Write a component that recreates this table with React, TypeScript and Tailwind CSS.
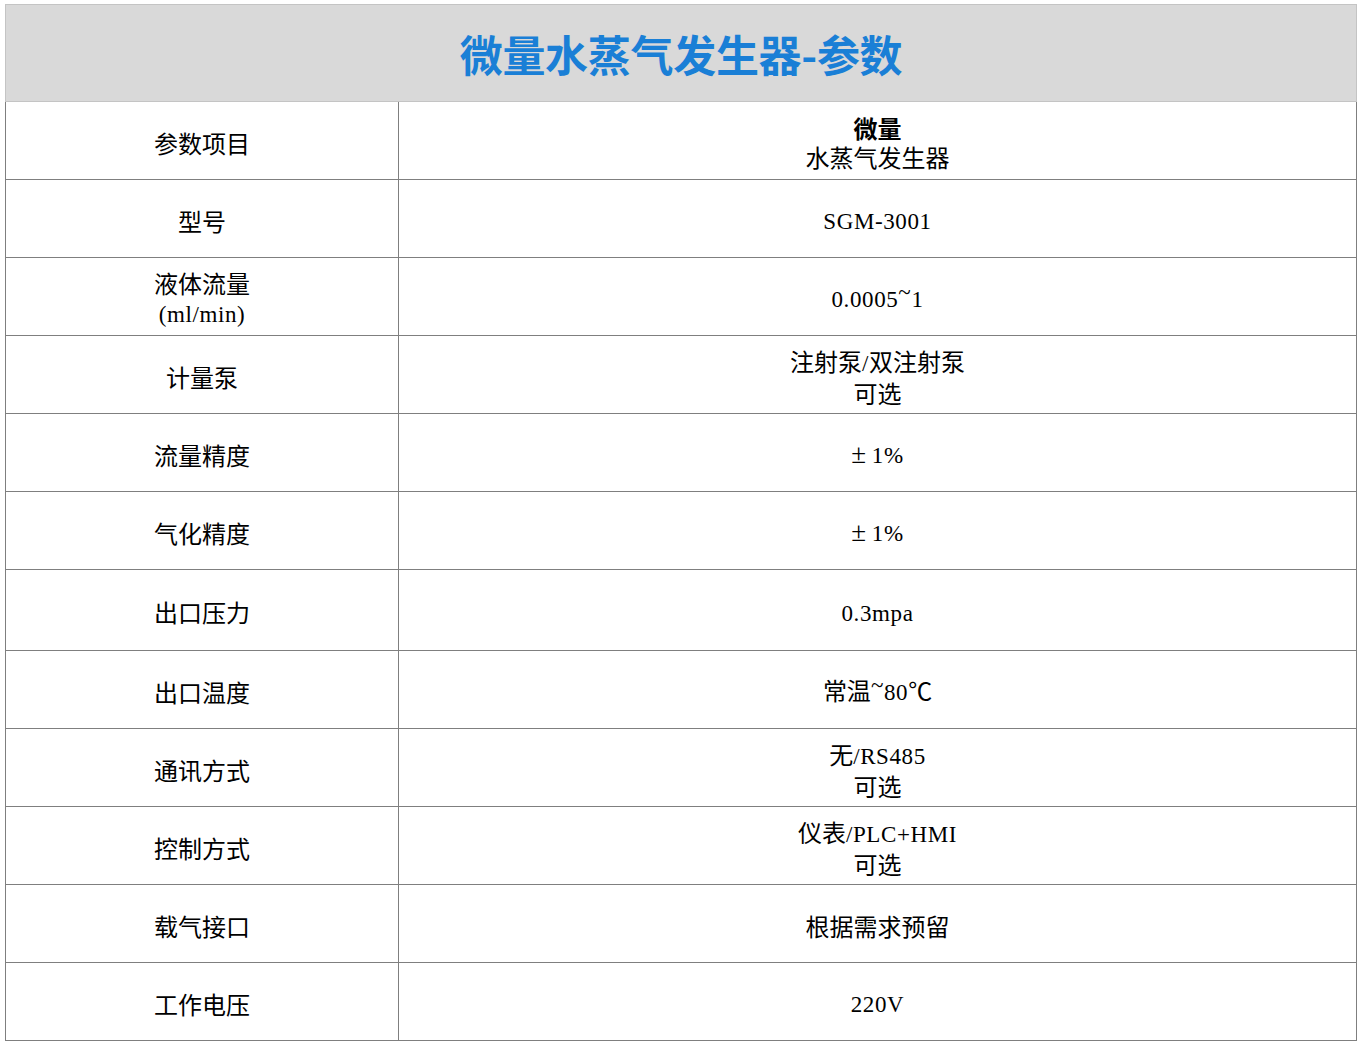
const rows: { label: string[]; value: string[]; h?: string }[] = [
  { label: ["型号"], value: ["SGM-3001"] },
  { label: ["液体流量", "(ml/min)"], value: ["0.0005~1"] },
  { label: ["计量泵"], value: ["注射泵/双注射泵", "可选"] },
  { label: ["流量精度"], value: ["±1%"] },
  { label: ["气化精度"], value: ["±1%"] },
  { label: ["出口压力"], value: ["0.3mpa"], h: "h-[81px]" },
  { label: ["出口温度"], value: ["常温~80℃"] },
  { label: ["通讯方式"], value: ["无/RS485", "可选"] },
  { label: ["控制方式"], value: ["仪表/PLC+HMI", "可选"] },
  { label: ["载气接口"], value: ["根据需求预留"] },
  { label: ["工作电压"], value: ["220V"] },
];

// latin runs get a serif face like the original page, cjk stays sans
function Mixed({ text }: { text: string }) {
  const parts = text.match(/[\x20-\x7e±]+|[^\x20-\x7e±]+/g) ?? [];
  return (
    <>
      {parts.map((p, i) => {
        if (!/^[\x20-\x7e±]+$/.test(p)) return <span key={i}>{p}</span>;
        return (
          <span key={i} className="text-[23px] tracking-[0.6px] [font-family:'Liberation_Serif',serif]">
            {p.split(/([~±])/).map((s, j) =>
              s === "~" ? (
                <span key={j} className="relative -top-[7px]">~</span>
              ) : s === "±" ? (
                <span key={j} className="text-[27px] mr-[5px]">±</span>
              ) : (
                s
              )
            )}
          </span>
        );
      })}
    </>
  );
}

function Cell({ lines, wide, bold }: { lines: string[]; wide?: boolean; bold?: boolean }) {
  return (
    <div
      className={
        wide
          ? "flex-1 flex flex-col items-center justify-center pt-[3px]"
          : "w-[393px] shrink-0 flex flex-col items-center justify-center pt-[3px] border-r border-[#7f7f7f]"
      }
    >
      {lines.map((t, i) => (
        <div key={i} className={bold && i === 0 ? "font-bold" : ""}>
          <Mixed text={t} />
        </div>
      ))}
    </div>
  );
}

export default function App() {
  return (
    <div className="min-h-screen bg-white pt-[4px] pl-[5px]">
      <div className="w-[1352px] text-black text-[24px] leading-[29px] [font-family:'Noto_Sans_CJK_SC',sans-serif]">
        <div className="h-[98px] bg-[#d9d9d9] border border-[#c4c4c4] flex items-center justify-center">
          <h1 className="text-[43px] font-bold text-[#1a7fd6] tracking-[-0.3px] leading-none">
            微量水蒸气发生器-参数
          </h1>
        </div>
        <div className="border-l border-r border-[#7f7f7f]">
          <div className="flex h-[78px] border-b border-[#7f7f7f]">
            <Cell lines={["参数项目"]} />
            <Cell lines={["微量", "水蒸气发生器"]} wide bold />
          </div>
          {rows.map((r, i) => (
            <div key={i} className={`flex border-b border-[#7f7f7f] ${r.h ?? "h-[78px]"}`}>
              <Cell lines={r.label} />
              <Cell lines={r.value} wide />
            </div>
          ))}
        </div>
      </div>
    </div>
  );
}
